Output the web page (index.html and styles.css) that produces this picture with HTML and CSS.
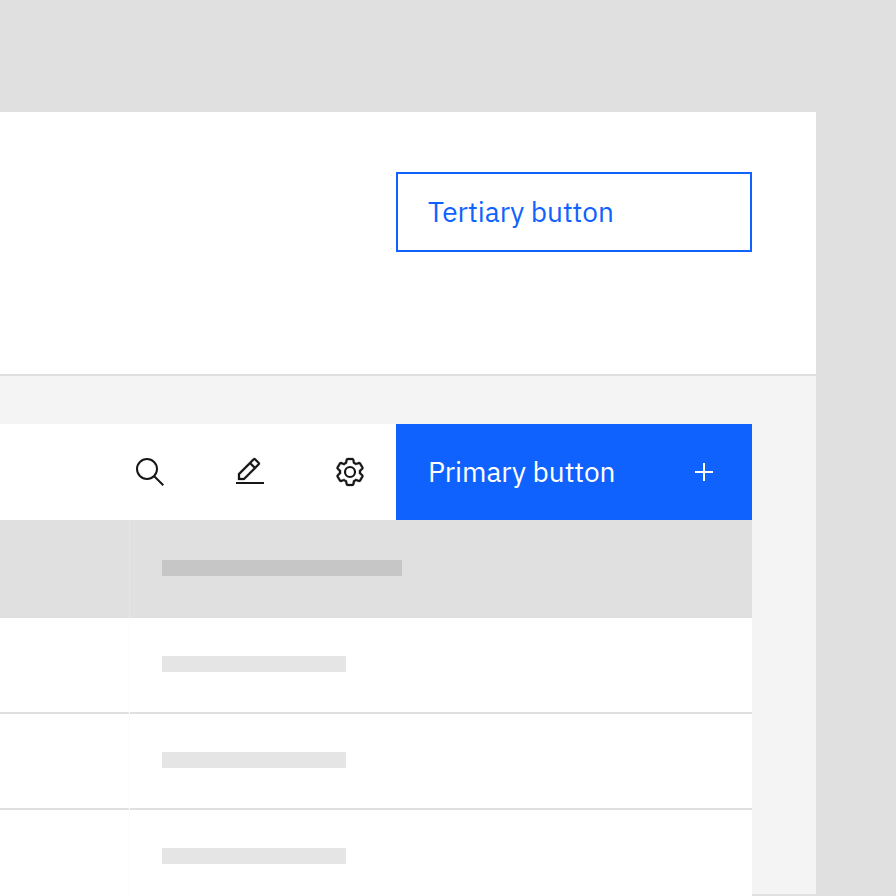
FILE: index.html
```html
<!DOCTYPE html>
<html lang="en">
<head>
<meta charset="utf-8">
<meta name="viewport" content="width=device-width, initial-scale=1">
<title>Button usage</title>
<link rel="stylesheet" href="styles.css">
</head>
<body>
<main class="panel">
  <header class="panel-header">
    <button class="button button-tertiary" type="button">Tertiary button</button>
  </header>
  <section class="panel-body">
    <div class="toolbar">
      <button class="icon-button" type="button" aria-label="Search">
        <svg class="icon" viewBox="0 0 32 32" aria-hidden="true"><g fill="none" stroke="currentColor" stroke-width="2"><circle cx="13" cy="13" r="10"/><path d="M20.2 20.2l9.1 9.1"/></g></svg>
      </button>
      <button class="icon-button" type="button" aria-label="Edit">
        <svg class="icon" viewBox="0 0 32 32" fill="currentColor" fill-rule="evenodd" aria-hidden="true"><path d="M2 26H30V28H2z"/><path stroke="currentColor" stroke-width=".3" d="M25.4 9c.8-.8.8-2 0-2.8l-3.6-3.6c-.8-.8-2-.8-2.8 0l-15 15V24h6.4L25.4 9zM20.4 4L24 7.6l-3 3L17.4 7 20.4 4zM6 22v-3.6l10-10 3.6 3.6-10 10H6z"/></svg>
      </button>
      <button class="icon-button" type="button" aria-label="Settings">
        <svg class="icon" viewBox="0 0 32 32" fill="currentColor" fill-rule="evenodd" aria-hidden="true"><path stroke="currentColor" stroke-width=".3" d="M27,16.76c0-.25,0-.5,0-.76s0-.51,0-.77l1.92-1.68A2,2,0,0,0,29.3,11L26.94,7a2,2,0,0,0-1.73-1,2,2,0,0,0-.64.1l-2.43.82a11.35,11.35,0,0,0-1.31-.75l-.51-2.52a2,2,0,0,0-2-1.61H13.64a2,2,0,0,0-2,1.61l-.51,2.52a11.48,11.48,0,0,0-1.32.75L7.43,6.06A2,2,0,0,0,6.79,6,2,2,0,0,0,5.06,7L2.7,11a2,2,0,0,0,.41,2.51L5,15.24c0,.25,0,.5,0,.76s0,.51,0,.77L3.11,18.45A2,2,0,0,0,2.7,21L5.06,25a2,2,0,0,0,1.73,1,2,2,0,0,0,.64-.1l2.43-.82a11.35,11.35,0,0,0,1.31.75l.51,2.52a2,2,0,0,0,2,1.61h4.72a2,2,0,0,0,2-1.61l.51-2.52a11.48,11.48,0,0,0,1.32-.75l2.42.82a2,2,0,0,0,.64.1,2,2,0,0,0,1.73-1L29.3,21a2,2,0,0,0-.41-2.51ZM25.21,24l-3.43-1.16a8.86,8.86,0,0,1-2.71,1.57L18.36,28H13.64l-.71-3.55a9.36,9.36,0,0,1-2.7-1.57L6.79,24,4.43,20l2.72-2.4a8.9,8.9,0,0,1,0-3.13L4.43,12,6.79,8l3.43,1.16a8.86,8.86,0,0,1,2.71-1.57L13.64,4h4.72l.71,3.55a9.36,9.36,0,0,1,2.7,1.57L25.21,8,27.57,12l-2.72,2.4a8.9,8.9,0,0,1,0,3.13L27.57,20Z"/><circle cx="16" cy="16" r="5" fill="none" stroke="currentColor" stroke-width="2.2"/></svg>
      </button>
      <button class="button button-primary" type="button">Primary button
        <svg class="icon" viewBox="0 0 32 32" fill="currentColor" aria-hidden="true"><path d="M17 15V7h-2v8H7v2h8v8h2v-8h8v-2z"/></svg>
      </button>
    </div>
    <table class="table" aria-label="Loading data">
      <thead>
        <tr><th></th><th><div class="skeleton skeleton-heading"></div></th></tr>
      </thead>
      <tbody>
        <tr><td></td><td><div class="skeleton"></div></td></tr>
        <tr><td></td><td><div class="skeleton"></div></td></tr>
        <tr><td></td><td><div class="skeleton"></div></td></tr>
      </tbody>
    </table>
  </section>
</main>
</body>
</html>
```
FILE: styles.css
```css
* {
  box-sizing: border-box;
}

body {
  display: flex;
  flex-direction: column;
  height: 100vh;
  margin: 0;
  padding: 112px 80px 2px 0;
  overflow: hidden;
  background: #e0e0e0;
  color: #161616;
  font-family: "IBM Plex Sans", "Noto Sans", sans-serif;
  font-size: 28px;
  line-height: 36px;
}

.panel {
  display: flex;
  flex: 1;
  flex-direction: column;
  min-height: 0;
  background: #f4f4f4;
}

.panel-header {
  display: flex;
  flex: none;
  justify-content: flex-end;
  padding: 60px 64px 122px;
  border-bottom: 2px solid #e0e0e0;
  background: #fff;
}

.panel-body {
  flex: 1;
  min-height: 0;
  padding: 48px 64px 0 0;
}

.button {
  display: flex;
  align-items: center;
  justify-content: space-between;
  width: 356px;
  padding: 0 32px;
  border: 0;
  font: inherit;
  text-align: left;
}

.button-tertiary {
  height: 80px;
  padding: 0 30px;
  border: 2px solid #0f62fe;
  background: transparent;
  color: #0f62fe;
}

.button-primary {
  height: 96px;
  background: #0f62fe;
  color: #fff;
}

.toolbar {
  display: flex;
  justify-content: flex-end;
  background: #fff;
}

.icon-button {
  display: flex;
  align-items: center;
  justify-content: center;
  width: 92px;
  margin-left: 8px;
  padding: 0;
  border: 0;
  background: transparent;
  color: #161616;
}

.icon {
  flex: none;
  width: 32px;
  height: 32px;
}

.table {
  width: 100%;
  border-spacing: 0;
  table-layout: fixed;
}

.table th,
.table td {
  height: 96px;
  padding: 38px 32px 42px;
  background: linear-gradient(#e0e0e0, #e0e0e0) bottom / 100% 2px no-repeat #fff;
}

.table th {
  height: 98px;
  padding: 40px 32px 42px;
  background: #e0e0e0;
}

.table th:first-child,
.table td:first-child {
  width: 130px;
  border-right: 1px solid #fbfbfb;
}

.table th:first-child {
  border-right-color: #e6e6e6;
}

.skeleton {
  width: 184px;
  height: 16px;
  background: #e5e5e5;
}

.skeleton-heading {
  width: 240px;
  background: #c6c6c6;
}
```
